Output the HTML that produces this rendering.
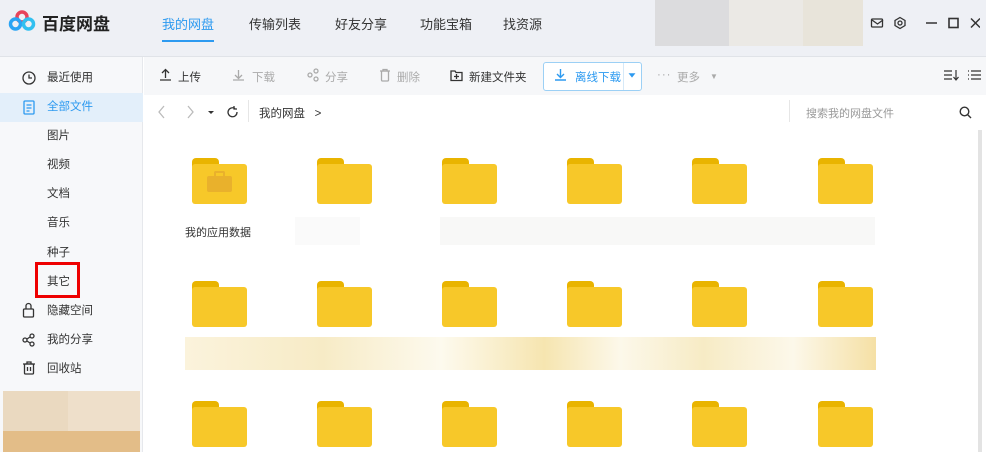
<!DOCTYPE html>
<html><head><meta charset="utf-8"><style>
*{margin:0;padding:0;box-sizing:border-box}
body{width:986px;height:452px;overflow:hidden;background:#fff;font-family:"Liberation Sans","Noto Sans CJK SC",sans-serif;color:#333;position:relative;font-size:12px}
.abs{position:absolute}
.top{left:0;top:0;width:986px;height:57px;background:#eef0f5;border-bottom:1px solid #e0e3e8}
.nav{top:14px;font-size:13px;color:#333}
.side{left:0;top:57px;width:143px;height:395px;background:#f7f8fa;border-right:1px solid #e6e8ec}
.si{left:0;width:143px;height:29px;line-height:29px;font-size:11.5px;color:#333}
.si span{position:absolute;left:47px}
.tool{left:144px;top:57px;width:842px;height:38px;background:#f6f7f9}
.tb{top:69px;font-size:11.5px}
.fold{position:absolute;width:55px;height:46px}
.fold .t{position:absolute;left:0;top:0;width:27px;height:12px;background:#e9b400;border-radius:4px 4px 0 0}
.fold .b{position:absolute;left:0;top:6px;width:55px;height:40px;background:#f7c829;border-radius:3px}
</style></head><body>
<div class="abs top"></div>
<svg class="abs" style="left:8px;top:10px" width="28" height="22" viewBox="0 0 28 22"><circle cx="14" cy="7" r="5" fill="none" stroke="#e8445a" stroke-width="3.5"/><circle cx="7.5" cy="14" r="5" fill="none" stroke="#2aa4f4" stroke-width="3.5"/><circle cx="20.5" cy="14" r="5" fill="none" stroke="#32c0f0" stroke-width="3.5"/></svg>
<div class="abs" style="left:42px;top:10px;font-size:17px;font-weight:bold;color:#222">百度网盘</div>
<div class="abs nav" style="left:162px;color:#2d9af0">我的网盘</div>
<div class="abs" style="left:162px;top:40px;width:52px;height:2px;background:#2d9af0"></div>
<div class="abs nav" style="left:249px">传输列表</div>
<div class="abs nav" style="left:335px">好友分享</div>
<div class="abs nav" style="left:420px">功能宝箱</div>
<div class="abs nav" style="left:503px">找资源</div>
<div class="abs" style="left:655px;top:0;width:74px;height:46px;background:#dcdcde"></div>
<div class="abs" style="left:729px;top:0;width:74px;height:46px;background:#ebe9e5"></div>
<div class="abs" style="left:803px;top:0;width:60px;height:46px;background:#e8e4da"></div>
<svg class="abs" style="left:870px;top:16px" width="110" height="14" viewBox="0 0 110 14" fill="none" stroke="#333" stroke-width="1.3"><rect x="1.5" y="3" width="11" height="8" rx="1"/><path d="M2 4l5.5 4 5.5-4"/><path d="M30 1.5l5 3v5l-5 3-5-3v-5z"/><circle cx="30" cy="7" r="2"/><path d="M56 7h11" stroke-width="1.5"/><rect x="79" y="2.5" width="9" height="9" stroke-width="1.6"/><path d="M101 2.5l9 9M110 2.5l-9 9" stroke-width="1.5"/></svg>
<div class="abs side"></div>
<div class="abs" style="left:0;top:93px;width:143px;height:29px;background:#e3effa"></div>
<div class="abs si" style="top:64px"><span>最近使用</span></div>
<div class="abs si" style="top:93px;color:#2d9af0"><span>全部文件</span></div>
<div class="abs si" style="top:122px"><span>图片</span></div>
<div class="abs si" style="top:151px"><span>视频</span></div>
<div class="abs si" style="top:180px"><span>文档</span></div>
<div class="abs si" style="top:209px"><span>音乐</span></div>
<div class="abs si" style="top:239px"><span>种子</span></div>
<div class="abs si" style="top:268px"><span>其它</span></div>
<div class="abs si" style="top:297px"><span>隐藏空间</span></div>
<div class="abs si" style="top:326px"><span>我的分享</span></div>
<div class="abs si" style="top:355px"><span>回收站</span></div>
<svg class="abs" style="left:21px;top:70px" width="16" height="310" viewBox="0 0 16 310" fill="none" stroke="#333" stroke-width="1.3"><circle cx="8" cy="8" r="6"/><path d="M8 4.5V8h3"/><rect x="3" y="31" width="10" height="13" rx="1" stroke="#2d9af0"/><path d="M5.5 35h5M5.5 38h5M5.5 41h3" stroke="#2d9af0"/><rect x="2.5" y="239" width="10" height="8" rx="1"/><path d="M5 239v-3a2.5 2.5 0 0 1 5 0v3"/><circle cx="4" cy="270" r="2"/><circle cx="11" cy="266" r="2"/><circle cx="11" cy="274" r="2"/><path d="M6 269l3-2M6 271l3 2"/><path d="M2 294h12M6 294v-2h4v2"/><rect x="3.5" y="294" width="9" height="10" rx="1"/><path d="M6.5 297v4M9.5 297v4"/></svg>
<div class="abs" style="left:35px;top:262px;width:45px;height:36px;border:3px solid #e00"></div>
<div class="abs" style="left:3px;top:391px;width:65px;height:40px;background:#ead9c0"></div>
<div class="abs" style="left:68px;top:391px;width:72px;height:40px;background:#eedfca"></div>
<div class="abs" style="left:3px;top:431px;width:137px;height:21px;background:#e3bd88"></div>
<div class="abs tool"></div>
<svg class="abs" style="left:158px;top:68px" width="320" height="14" viewBox="0 0 320 14" fill="none" stroke-width="1.3"><path d="M2 12h11M7.5 10V2M4 5l3.5-3.5L11 5" stroke="#333"/><path d="M75 12h11M80.5 2v8M77 7l3.5 3.5L84 7" stroke="#aaa"/><g stroke="#aaa"><circle cx="152" cy="7" r="2"/><circle cx="158" cy="3" r="2"/><circle cx="158" cy="11" r="2"/><path d="M222 3h10M225 3V1.5h4V3"/><rect x="223.5" y="3" width="7" height="10" rx="1"/></g><path d="M293 3h4l1 1.5h6v8h-11z M298.5 6v5M296 8.5h5" stroke="#333"/></svg>
<div class="abs tb" style="left:178px">上传</div>
<div class="abs tb" style="left:252px;color:#aaa">下载</div>
<div class="abs tb" style="left:325px;color:#aaa">分享</div>
<div class="abs tb" style="left:397px;color:#aaa">删除</div>
<div class="abs tb" style="left:469px">新建文件夹</div>
<div class="abs" style="left:543px;top:62px;width:99px;height:29px;border:1px solid #9cd0f5;border-radius:3px;background:#fff"></div>
<div class="abs" style="left:623px;top:63px;width:1px;height:27px;background:#d6e9f8"></div>
<svg class="abs" style="left:554px;top:68px" width="84" height="14" viewBox="0 0 84 14" fill="none" stroke="#2d9af0" stroke-width="1.4"><path d="M1 12h11M6.5 1v8M3 6l3.5 3.5L10 6"/><path d="M76 6h4l-2 2.5z" fill="#2d9af0"/></svg>
<div class="abs tb" style="left:575px;color:#2d9af0">离线下载</div>
<div class="abs tb" style="left:657px;color:#aaa;letter-spacing:1px">···</div>
<div class="abs tb" style="left:677px;color:#aaa">更多</div>
<div class="abs tb" style="left:710px;color:#aaa;font-size:8px;top:72px">▼</div>
<svg class="abs" style="left:943px;top:69px" width="40" height="12" viewBox="0 0 40 12" fill="none" stroke="#333" stroke-width="1.2"><path d="M1 2h8M1 6h8M1 10h8M13 1v10M10.5 8l2.5 3 2.5-3"/><path d="M25 2h1M25 6h1M25 10h1M28 2h10M28 6h10M28 10h10"/></svg>
<svg class="abs" style="left:156px;top:104px" width="90" height="16" viewBox="0 0 90 16" fill="none" stroke-width="1.3"><path d="M8 2L3 8l5 6" stroke="#bbb"/><path d="M32 2l5 6-5 6" stroke="#bbb"/><path d="M52 7h6l-3 3z" fill="#333" stroke="none"/><path d="M79 4.5a4.5 4.5 0 1 0 2 3.5M78 2v3h3" stroke="#333"/></svg>
<div class="abs" style="left:248px;top:100px;width:1px;height:22px;background:#e6e6e6"></div>
<div class="abs" style="left:259px;top:105px;font-size:11.5px">我的网盘 &nbsp;&nbsp;&gt;</div>
<div class="abs" style="left:789px;top:100px;width:1px;height:22px;background:#e6e6e6"></div>
<div class="abs" style="left:806px;top:105px;font-size:11px;color:#999">搜索我的网盘文件</div>
<svg class="abs" style="left:959px;top:106px" width="13" height="13" viewBox="0 0 13 13" fill="none" stroke="#333" stroke-width="1.4"><circle cx="5.5" cy="5.5" r="4.3"/><path d="M8.7 8.7L12 12"/></svg>
<div class="abs" style="left:978px;top:130px;width:4px;height:322px;background:#e3e3e3"></div>
<div id="f"></div>
<div class="abs" style="left:185px;top:224px;font-size:11px">我的应用数据</div>
<div class="abs" style="left:295px;top:217px;width:65px;height:28px;background:#fafafa"></div>
<div class="abs" style="left:440px;top:217px;width:435px;height:28px;background:#f8f8f7"></div>
<div class="abs" style="left:185px;top:337px;width:691px;height:33px;background:linear-gradient(90deg,#fbf3dc,#f7ebc6 20%,#fdfaee 37%,#f6e5b0 52%,#fcf8ea 63%,#f7ebc5 75%,#fcf8ea 88%,#f5e0a5)"></div>
<script>
var h='';var xs=[192,317,442,567,692,818],ys=[158,281,401];
ys.forEach(function(y,r){xs.forEach(function(x,c){h+='<div class="fold" style="left:'+x+'px;top:'+y+'px"><div class="t"></div><div class="b"></div>'+(r==0&&c==0?'<div style="position:absolute;left:15px;top:18px;width:25px;height:16px;background:#e9b12c;border-radius:2px"></div><div style="position:absolute;left:22px;top:13px;width:11px;height:6px;border:2px solid #e9b12c;border-bottom:none;border-radius:2px 2px 0 0"></div>':'')+'</div>';});});
document.getElementById('f').innerHTML=h;
</script>
</body></html>
